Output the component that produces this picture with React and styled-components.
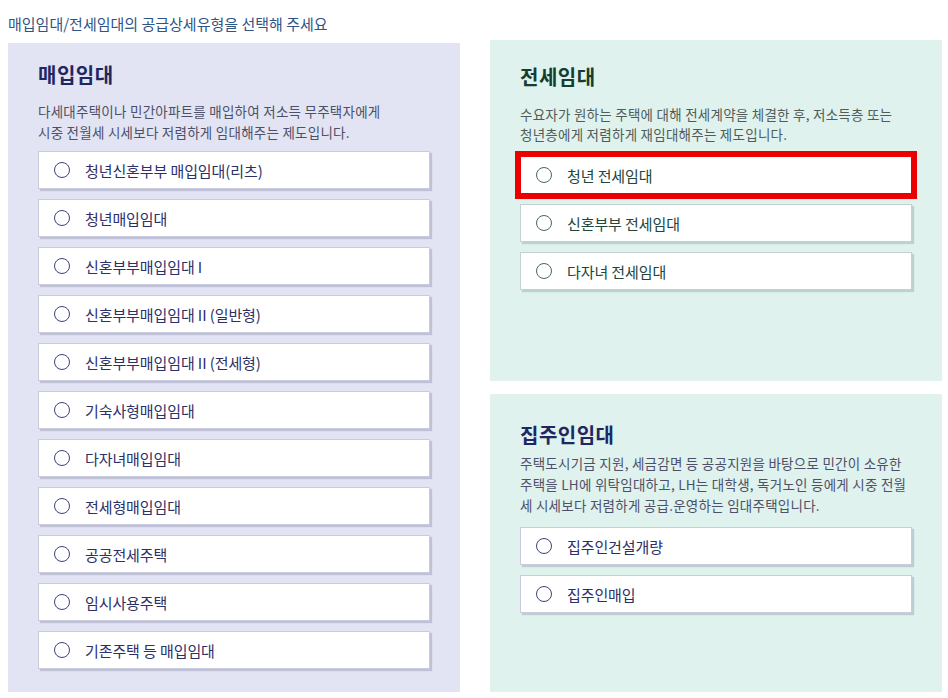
import React from "react";
import styled, { createGlobalStyle } from "styled-components";

const tones = {
    navy: {
        title: "#1f2762",
        desc: "#4d5068",
        text: "#2b3068",
        radio: "#3c427c",
        border: "#c9cbdc",
        shadow: "rgba(70, 74, 120, 0.22)"
    },
    green: {
        title: "#163d2f",
        desc: "#515c58",
        text: "#21463a",
        radio: "#416a5b",
        border: "#c4d2cd",
        shadow: "rgba(60, 100, 88, 0.22)"
    }
};

const GlobalStyle = createGlobalStyle`
    body {
        margin: 0;
        background: #ffffff;
        font-family: "Noto Sans CJK KR", "Noto Sans", sans-serif;
    }
`;

const Page = styled.div`
    width: 948px;
    padding: 0 8px;
    box-sizing: border-box;
`;

const Heading = styled.h2`
    margin: 0;
    height: 40px;
    padding-top: 14px;
    box-sizing: border-box;
    font-size: 15px;
    line-height: 20px;
    font-weight: 400;
    color: #2f5586;
`;

const Columns = styled.div`
    display: grid;
    grid-template-columns: 452px 452px;
    column-gap: 30px;
    align-items: start;
`;

const Stack = styled.div`
    display: flex;
    flex-direction: column;
    gap: 13px;
`;

const Panel = styled.section`
    box-sizing: border-box;
    height: ${p => p.$height}px;
    margin-top: ${p => p.$offset || 0}px;
    padding: ${p => p.$top}px 30px 0;
    background: ${p => (p.$bg === "green" ? "#dff2ee" : "#e2e4f3")};
`;

const Title = styled.h3`
    margin: 0;
    font-size: 20px;
    line-height: 28px;
    font-weight: 700;
    letter-spacing: 0.5px;
    color: ${p => tones[p.$tone].title};
`;

const Desc = styled.p`
    margin: ${p => p.$gap}px 0 ${p => p.$after}px;
    font-size: 13.5px;
    line-height: ${p => p.$lh}px;
    letter-spacing: 0.25px;
    white-space: nowrap;
    color: ${p => tones[p.$tone].desc};
`;

const List = styled.div`
    display: flex;
    flex-direction: column;
    gap: 10px;
`;

const Option = styled.label`
    display: flex;
    align-items: center;
    gap: 15px;
    height: 38px;
    padding-left: 15px;
    box-sizing: border-box;
    background: #ffffff;
    border: 1px solid ${p => tones[p.$tone].border};
    box-shadow: 2px 2px 1px ${p => tones[p.$tone].shadow};
    cursor: pointer;
    ${p => p.$marked && "outline: 6px solid #ea0000; outline-offset: -1px;"}
`;

const Radio = styled.span`
    width: 16px;
    height: 16px;
    flex: none;
    box-sizing: border-box;
    border-radius: 50%;
    border: 1.5px solid ${p => tones[p.$tone].radio};
`;

const OptionText = styled.span`
    font-size: 15px;
    letter-spacing: -0.1px;
    color: ${p => tones[p.$tone].text};
`;

const buyItems = [
    "청년신혼부부 매입임대(리츠)",
    "청년매입임대",
    "신혼부부매입임대 I",
    "신혼부부매입임대 II (일반형)",
    "신혼부부매입임대 II (전세형)",
    "기숙사형매입임대",
    "다자녀매입임대",
    "전세형매입임대",
    "공공전세주택",
    "임시사용주택",
    "기존주택 등 매입임대"
];

const jeonseItems = ["청년 전세임대", "신혼부부 전세임대", "다자녀 전세임대"];

const ownerItems = ["집주인건설개량", "집주인매입"];

const OptionList = ({ items, tone, marked }) => (
    <List>
        {items.map(item => (
            <Option key={item} $tone={tone} $marked={item === marked}>
                <Radio $tone={tone} />
                <OptionText $tone={tone}>{item}</OptionText>
            </Option>
        ))}
    </List>
);

const App = () => {
    return (
        <Page>
            <GlobalStyle />
            <Heading>매입임대/전세임대의 공급상세유형을 선택해 주세요</Heading>
            <Columns>
                <Panel $height={649} $offset={3} $top={18}>
                    <Title $tone="navy">매입임대</Title>
                    <Desc $tone="navy" $gap={12} $after={8} $lh={21}>
                        다세대주택이나 민간아파트를 매입하여 저소득 무주택자에게
                        <br />
                        시중 전월세 시세보다 저렴하게 임대해주는 제도입니다.
                    </Desc>
                    <OptionList items={buyItems} tone="navy" />
                </Panel>
                <Stack>
                    <Panel $height={341} $bg="green" $top={23}>
                        <Title $tone="green">전세임대</Title>
                        <Desc $tone="green" $gap={13} $after={12} $lh={20}>
                            수요자가 원하는 주택에 대해 전세계약을 체결한 후, 저소득층 또는
                            <br />
                            청년층에게 저렴하게 재임대해주는 제도입니다.
                        </Desc>
                        <OptionList items={jeonseItems} tone="green" marked="청년 전세임대" />
                    </Panel>
                    <Panel $height={298} $bg="green" $top={27}>
                        <Title $tone="navy">집주인임대</Title>
                        <Desc $tone="navy" $gap={4} $after={11} $lh={21}>
                            주택도시기금 지원, 세금감면 등 공공지원을 바탕으로 민간이 소유한
                            <br />
                            주택을 LH에 위탁임대하고, LH는 대학생, 독거노인 등에게 시중 전월
                            <br />
                            세 시세보다 저렴하게 공급.운영하는 임대주택입니다.
                        </Desc>
                        <OptionList items={ownerItems} tone="navy" />
                    </Panel>
                </Stack>
            </Columns>
        </Page>
    );
};

export default App;
